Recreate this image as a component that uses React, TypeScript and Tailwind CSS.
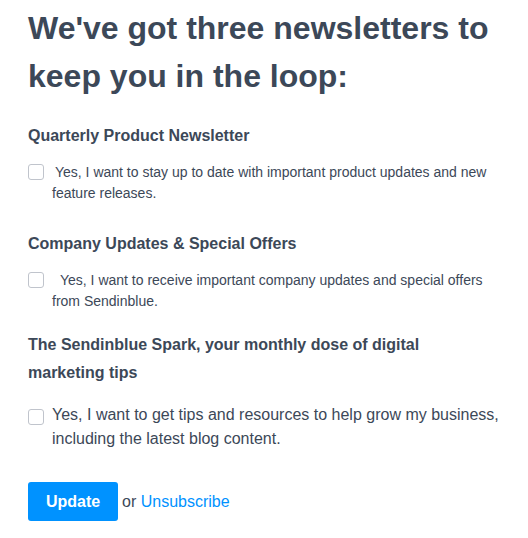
import React from "react";

function Box() {
  return (
    <span className="block w-[16px] h-[16px] shrink-0 rounded-[3px] border border-[#c0c4cc] bg-white" />
  );
}

export default function App() {
  return (
    <div className="bg-white min-h-[538px] pl-[28px] pr-[20px] pt-[4px] text-[#3c4858]" style={{ fontFamily: '"Liberation Sans", Arial, sans-serif' }}>
      <h1 className="text-[32px] leading-[48px] font-bold text-[#3c4858]">
        We've got three newsletters to keep you in the loop:
      </h1>

      <h2 className="mt-[22px] text-[16px] leading-[28px] font-bold">Quarterly Product Newsletter</h2>
      <div className="mt-[12px] relative pl-[24px] text-[14px] leading-[21px]">
        <span className="absolute left-0 top-[2px]"><Box /></span>
        <p className="indent-[3px]">Yes, I want to stay up to date with important product updates and new feature releases.</p>
      </div>

      <h2 className="mt-[26px] text-[16px] leading-[28px] font-bold">Company Updates &amp; Special Offers</h2>
      <div className="mt-[12px] relative pl-[24px] text-[14px] leading-[21px]">
        <span className="absolute left-0 top-[2px]"><Box /></span>
        <p className="indent-[8px]">Yes, I want to receive important company updates and special offers from Sendinblue.</p>
      </div>

      <h2 className="mt-[19px] text-[16px] leading-[28px] font-bold max-w-[440px]">The Sendinblue Spark, your monthly dose of digital marketing tips</h2>
      <div className="mt-[16px] relative pl-[24px] text-[16px] leading-[24px]">
        <span className="absolute left-0 top-[6px]"><Box /></span>
        <p>Yes, I want to get tips and resources to help grow my business, including the latest blog content.</p>
      </div>

      <div className="mt-[31px] flex items-center">
        <button className="w-[90px] h-[39px] rounded-[3px] bg-[#0092ff] text-white text-[16px] font-bold">Update</button>
        <span className="ml-[4px] text-[16px]">or <a className="text-[#0092ff]" href="#">Unsubscribe</a></span>
      </div>
    </div>
  );
}
